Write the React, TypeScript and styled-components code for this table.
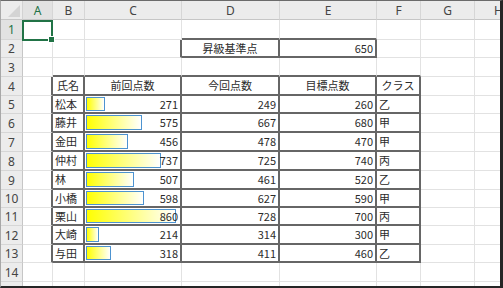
import React from "react";
import styled, { createGlobalStyle } from "styled-components";

const GlobalStyle = createGlobalStyle`
  html, body {
    margin: 0;
    padding: 0;
    background: #ffffff;
  }
`;

const COLS = ["A", "B", "C", "D", "E", "F", "G", "H"];
const COL_W = [30, 32, 97, 98, 97, 44, 54, 55];
const ROW_H = [20, 18, 19, 19, 18, 19, 19, 19, 19, 18, 18, 19, 18, 19, 10];
const LAST_LABELED_ROW = 14;

const students = [
  { name: "松本", prev: 271, now: 249, goal: 260, cls: "乙" },
  { name: "藤井", prev: 575, now: 667, goal: 680, cls: "甲" },
  { name: "金田", prev: 456, now: 478, goal: 470, cls: "甲" },
  { name: "仲村", prev: 737, now: 725, goal: 740, cls: "丙" },
  { name: "林", prev: 507, now: 461, goal: 520, cls: "乙" },
  { name: "小橋", prev: 598, now: 627, goal: 590, cls: "甲" },
  { name: "栗山", prev: 860, now: 728, goal: 700, cls: "丙" },
  { name: "大崎", prev: 214, now: 314, goal: 300, cls: "甲" },
  { name: "与田", prev: 318, now: 411, goal: 460, cls: "乙" },
];

const MIN = Math.min(...students.map((s) => s.prev));
const MAX = Math.max(...students.map((s) => s.prev));

type Align = "left" | "center" | "right";

interface CellData {
  text?: string;
  align?: Align;
  bar?: number;
}

const cells: Record<string, CellData> = {
  D2: { text: "昇級基準点", align: "center" },
  E2: { text: "650", align: "right" },
  B4: { text: "氏名", align: "center" },
  C4: { text: "前回点数", align: "center" },
  D4: { text: "今回点数", align: "center" },
  E4: { text: "目標点数", align: "center" },
  F4: { text: "クラス", align: "center" },
};

students.forEach((s, i) => {
  const r = i + 5;
  cells["B" + r] = { text: s.name, align: "left" };
  cells["C" + r] = { text: String(s.prev), align: "right", bar: s.prev };
  cells["D" + r] = { text: String(s.now), align: "right" };
  cells["E" + r] = { text: String(s.goal), align: "right" };
  cells["F" + r] = { text: s.cls, align: "left" };
});

// table B4:F13 and box D2:E2 have thin borders on every side
const inTable = (c: number, r: number) => c >= 1 && c <= 5 && r >= 4 && r <= 13;
const inBox = (c: number, r: number) => (c === 3 || c === 4) && r === 2;
const bordered = (c: number, r: number) => inTable(c, r) || inBox(c, r);

const darkRight = (c: number, r: number) => bordered(c, r) || bordered(c + 1, r);
const darkBottom = (c: number, r: number) => bordered(c, r) || bordered(c, r + 1);

const barWidth = (v: number) => 12.7 + ((v - MIN) * (89.7 - 12.7)) / (MAX - MIN);

export default function App() {
  const rows = ROW_H.map((_, i) => i + 1);
  return (
    <>
      <GlobalStyle />
      <Frame>
        <Sheet>
          <Corner />
          {COLS.map((col, c) => (
            <ColHeader key={col} $active={c === 0} $last={c === COLS.length - 1}>
              {col}
            </ColHeader>
          ))}
          {rows.map((r) => (
            <React.Fragment key={r}>
              <RowHeader $active={r === 1}>{r <= LAST_LABELED_ROW ? r : ""}</RowHeader>
              {COLS.map((col, c) => {
                const data = cells[col + r];
                return (
                  <Cell
                    key={col + r}
                    $darkR={darkRight(c, r)}
                    $darkB={darkBottom(c, r)}
                    $align={data?.align ?? "left"}
                  >
                    {data?.bar !== undefined && <DataBar style={{ width: barWidth(data.bar) }} />}
                    {data?.text && <CellText>{data.text}</CellText>}
                    {col === "A" && r === 1 && (
                      <Selection>
                        <FillHandle />
                      </Selection>
                    )}
                  </Cell>
                );
              })}
            </React.Fragment>
          ))}
        </Sheet>
      </Frame>
    </>
  );
}

const Frame = styled.div`
  width: 503px;
  height: 288px;
  box-sizing: border-box;
  border-top: 1px solid #6b6b6b;
  border-left: 1px solid #a8a8a8;
  border-right: 3px solid #262626;
  border-bottom: 2px solid #262626;
  overflow: hidden;
  background: #ffffff;
`;

const Sheet = styled.div`
  display: grid;
  grid-template-columns: 22px ${COL_W.map((w) => w + "px").join(" ")};
  grid-template-rows: 19px ${ROW_H.map((h) => h + "px").join(" ")};
  width: max-content;
  font-family: "Noto Sans CJK JP", "Noto Sans", sans-serif;
  font-size: 11px;
  color: #2b2b2b;
`;

const Corner = styled.div`
  position: relative;
  background: #ececec;
  border-right: 1px solid #d2d2d2;
  border-bottom: 1px solid #c6c6c6;
  box-sizing: border-box;
  &::after {
    content: "";
    position: absolute;
    right: 2px;
    bottom: 2px;
    width: 0;
    height: 0;
    border-left: 12px solid transparent;
    border-bottom: 12px solid #d4d4d4;
  }
`;

const ColHeader = styled.div<{ $active?: boolean; $last?: boolean }>`
  display: flex;
  align-items: center;
  justify-content: ${(p) => (p.$last ? "flex-start" : "center")};
  padding-left: ${(p) => (p.$last ? "19px" : "0")};
  box-sizing: border-box;
  background: ${(p) => (p.$active ? "#e2e2e2" : "#ececec")};
  border-right: 1px solid #d6d6d6;
  border-bottom: 1px solid #c6c6c6;
  font-family: "Noto Sans", "Segoe UI", sans-serif;
  font-size: 12px;
  color: ${(p) => (p.$active ? "#217346" : "#444444")};
`;

const RowHeader = styled.div<{ $active?: boolean }>`
  display: flex;
  align-items: center;
  justify-content: center;
  box-sizing: border-box;
  background: ${(p) => (p.$active ? "#e2e2e2" : "#ececec")};
  border-right: 1px solid #c6c6c6;
  border-bottom: 1px solid #d6d6d6;
  font-family: "Noto Sans", "Segoe UI", sans-serif;
  font-size: 12px;
  color: ${(p) => (p.$active ? "#217346" : "#444444")};
`;

const Cell = styled.div<{ $darkR: boolean; $darkB: boolean; $align: Align }>`
  position: relative;
  display: flex;
  align-items: center;
  justify-content: ${(p) =>
    p.$align === "right" ? "flex-end" : p.$align === "center" ? "center" : "flex-start"};
  box-sizing: border-box;
  padding: 0 2px;
  white-space: nowrap;
  border-right: ${(p) => (p.$darkR ? "2px solid #666666" : "1px solid #e2e2e2")};
  border-bottom: ${(p) => (p.$darkB ? "2px solid #666666" : "1px solid #e2e2e2")};
`;

const CellText = styled.span`
  position: relative;
  z-index: 1;
  line-height: 1;
`;

const DataBar = styled.div`
  position: absolute;
  left: 1px;
  top: 1px;
  bottom: 1px;
  box-sizing: border-box;
  border: 1px solid #4d93d0;
  background: linear-gradient(90deg, #ffff00 0%, #ffff5a 35%, #ffffff 100%);
`;

const Selection = styled.div`
  position: absolute;
  left: -1px;
  top: 0;
  width: 31px;
  height: 21px;
  box-sizing: border-box;
  border: 2px solid #217346;
  z-index: 2;
`;

const FillHandle = styled.div`
  position: absolute;
  right: -4px;
  bottom: -4px;
  width: 5px;
  height: 5px;
  background: #217346;
  border: 1px solid #ffffff;
`;
